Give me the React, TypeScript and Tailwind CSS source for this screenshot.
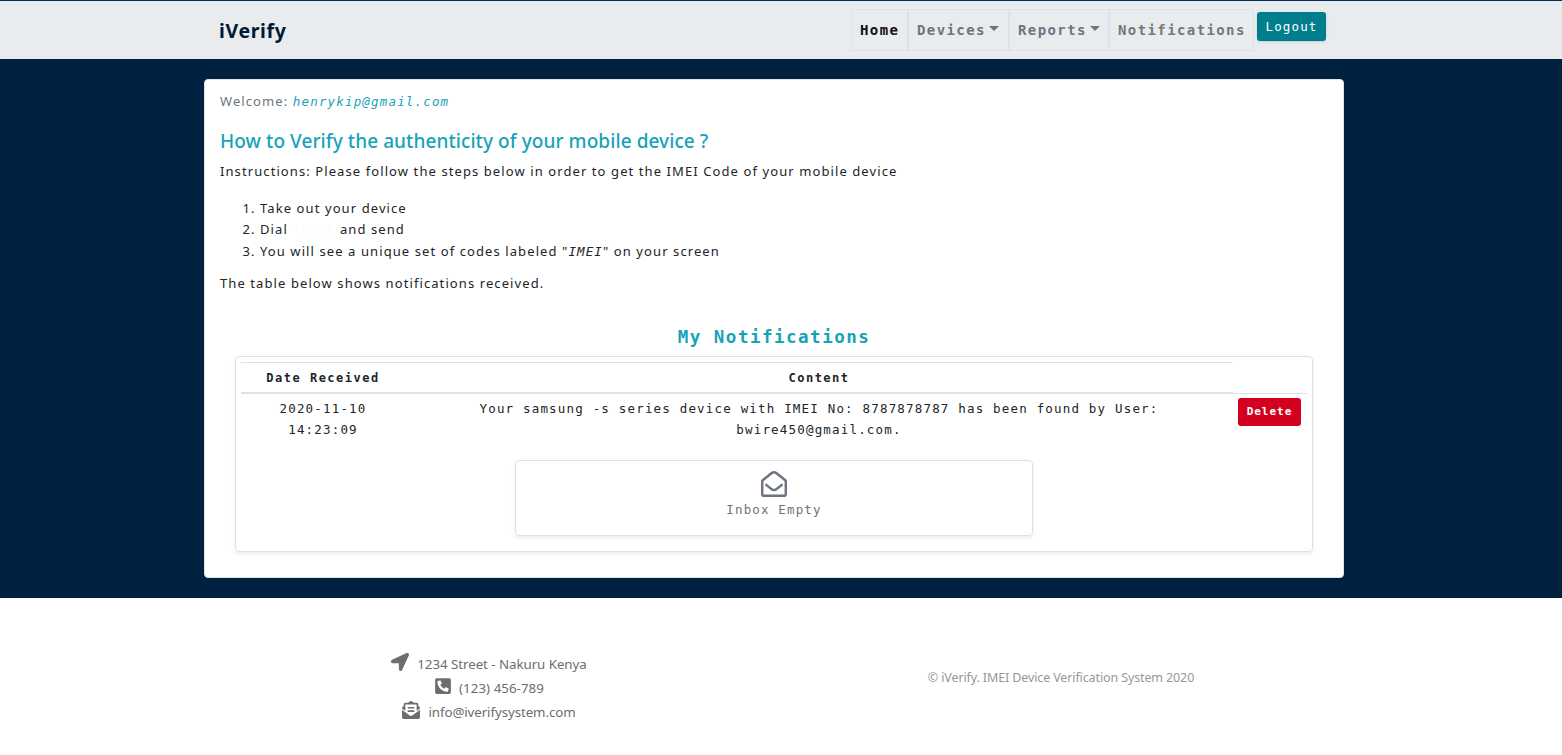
import type { ReactNode } from "react";
import { FaRegEnvelopeOpen, FaLocationArrow, FaPhoneSquareAlt, FaEnvelopeOpenText } from "react-icons/fa";

const mono = "font-['DejaVu_Sans_Mono',monospace]";

function NavItem({ children, caret, className }: { children: ReactNode; caret?: boolean; className: string }) {
  return (
    <a className={`flex h-[42px] items-center border border-[#dee2e6] pl-2 text-[14px] font-bold tracking-[1.4px] font-['DejaVu_Sans_Mono',monospace] ${className}`}>
      {children}
      {caret && <span className="mb-[3px] ml-[3px] border-x-[5px] border-t-[5px] border-x-transparent border-t-current" />}
    </a>
  );
}

function Header() {
  return (
    <header className="h-[59px] border-t border-[#00305a] bg-[#e9ecef]">
      <div className="ml-[219px] flex w-[1107px] items-start justify-between">
        <a className="pt-[16px] text-[19.5px] font-bold leading-[28px] tracking-[0.65px] text-[#001a33]">iVerify</a>
        <nav className="flex pt-2">
          <NavItem className="w-[57px] text-[#111]">Home</NavItem>
          <NavItem caret className="w-[101px] text-[#6c757d]">Devices</NavItem>
          <NavItem caret className="w-[100px] text-[#6c757d]">Reports</NavItem>
          <NavItem className="w-[145px] text-[#777]">Notifications</NavItem>
          <button className={`ml-[3px] mt-[3px] h-[29px] w-[69px] rounded-[3px] bg-[#007e8e] pt-px text-[12.5px] tracking-[1.15px] text-white shadow-sm ${mono}`}>Logout</button>
        </nav>
      </div>
    </header>
  );
}

function Notifications() {
  return (
    <section className={mono}>
      <h2 className="mt-[31px] text-center text-[17.5px] font-bold leading-[24px] tracking-[1.5px] text-[#17a2b8]">My Notifications</h2>
      <div className="ml-[15px] mt-[7px] h-[196px] w-[1078px] rounded border border-[#dee2e6] p-[5px] shadow-[0_2px_4px_rgba(0,0,0,0.075)]">
        <div className="grid grid-cols-[164px_828px_74px] text-center text-[12.5px] leading-[21px] tracking-[1.18px]">
          <div className="h-[32px] border-b-2 border-t border-[#dee2e6] pt-[5px] font-bold text-[12px] tracking-[1.5px]">Date Received</div>
          <div className="h-[32px] border-b-2 border-t border-[#dee2e6] pt-[5px] font-bold text-[12px] tracking-[1.5px]">Content</div>
          <div className="h-[32px] border-b border-[#dee2e6]" />
          <div className="px-8 pt-[4px]">2020-11-10 14:23:09</div>
          <div className="px-16 pt-[4px]">Your samsung -s series device with IMEI No: 8787878787 has been found by User: bwire450@gmail.com.</div>
          <div className="pl-[5px] pt-[4px] text-left">
            <button className="block h-[28px] w-[63px] rounded-[3px] bg-[#d4001f] text-center text-[11px] font-bold tracking-[1px] text-white">Delete</button>
          </div>
        </div>
        <div className="mx-auto mt-[20px] flex h-[76px] w-[518px] flex-col items-center rounded border border-[#dee2e6] pt-[10px] text-[12.5px] leading-[20px] tracking-[1.15px] text-[#6c757d] shadow-[0_2px_4px_rgba(0,0,0,0.075)]">
          <FaRegEnvelopeOpen size={26} />
          <span className="mt-[3px]">Inbox Empty</span>
        </div>
      </div>
    </section>
  );
}

function Footer() {
  return (
    <footer className="flex h-[157px] items-start bg-white pt-[54px] text-[#6c6d70]">
      <div className="ml-[205px] flex w-[568px] flex-col items-center text-[13.3px] leading-[24px]">
        <div className="flex h-6 items-center gap-2"><FaLocationArrow size={18} className="mb-1" /><span className="tracking-[-0.04px]">1234 Street - Nakuru Kenya</span></div>
        <div className="flex h-6 items-center gap-[7px]"><FaPhoneSquareAlt size={18} className="mb-1" /><span className="tracking-[0.05px]">(123) 456-789</span></div>
        <div className="flex h-6 items-center gap-2"><FaEnvelopeOpenText size={18} className="mb-1" /><span className="tracking-[-0.08px]">info@iverifysystem.com</span></div>
      </div>
      <div className="ml-[4px] w-[568px] pt-[14px] text-center text-[12.5px] leading-[24px] tracking-[-0.12px] text-[#969799]">© iVerify. IMEI Device Verification System 2020</div>
    </footer>
  );
}

export default function App() {
  return (
    <div className="h-[755px] overflow-hidden bg-[#00213f] font-['Noto_Sans',sans-serif] text-[#212529]">
      <Header />
      <main className="ml-[204px] mt-5 h-[499px] w-[1140px] rounded border border-[#dee2e6] bg-white px-[15px] text-[13px] leading-[21px] tracking-[1.09px]">
        <p className="pt-[11px] text-[#6c757d]">Welcome: <em className={`text-[12.5px] tracking-[1.17px] text-[#17a2b8] ${mono}`}>henrykip@gmail.com</em></p>
        <h1 className="mt-[17px] text-[19px] font-medium leading-[24px] tracking-[0.08px] text-[#17a2b8]">How to Verify the authenticity of your mobile device ?</h1>
        <p className="mt-[8px]">Instructions: Please follow the steps below in order to get the IMEI Code of your mobile device</p>
        <ol className="mt-[16px] list-decimal pl-[40px] leading-[21.3px]">
          <li>Take out your device</li>
          <li>Dial <em className={`text-[12.5px] text-[#fffafa] ${mono}`}>*#06#</em> and send</li>
          <li>You will see a unique set of codes labeled "<em className={`text-[12.5px] ${mono}`}>IMEI</em>" on your screen</li>
        </ol>
        <p className="mt-[11px]">The table below shows notifications received.</p>
        <Notifications />
      </main>
      <div className="h-5" />
      <Footer />
    </div>
  );
}
